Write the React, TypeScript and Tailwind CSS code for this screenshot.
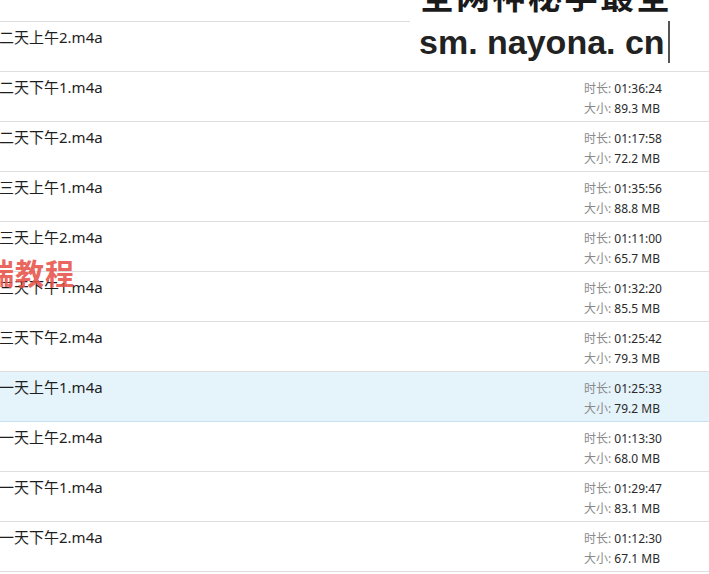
import React from "react";

interface Track {
  name: string;
  duration?: string;
  size?: string;
  active?: boolean;
}

const tracks: Track[] = [
  { name: "第一天下午2.m4a", duration: "01:12:30", size: "67.1 MB" },
  { name: "第二天上午2.m4a" },
  { name: "第二天下午1.m4a", duration: "01:36:24", size: "89.3 MB" },
  { name: "第二天下午2.m4a", duration: "01:17:58", size: "72.2 MB" },
  { name: "第三天上午1.m4a", duration: "01:35:56", size: "88.8 MB" },
  { name: "第三天上午2.m4a", duration: "01:11:00", size: "65.7 MB" },
  { name: "第三天下午1.m4a", duration: "01:32:20", size: "85.5 MB" },
  { name: "第三天下午2.m4a", duration: "01:25:42", size: "79.3 MB" },
  { name: "第一天上午1.m4a", duration: "01:25:33", size: "79.2 MB", active: true },
  { name: "第一天上午2.m4a", duration: "01:13:30", size: "68.0 MB" },
  { name: "第一天下午1.m4a", duration: "01:29:47", size: "83.1 MB" },
  { name: "第一天下午2.m4a", duration: "01:12:30", size: "67.1 MB" },
];

const font = { fontFamily: '"Noto Sans", "Noto Sans CJK SC", sans-serif' };

const Row: React.FC<{ t: Track; first?: boolean }> = ({ t, first }) => (
  <div
    className={
      "flex h-[50px] border-b " +
      (t.active ? "bg-[#e5f3fb] border-[#c6e2f2]" : "bg-white border-[#dedede]")
    }
  >
    <div className="-ml-[16px] pt-[5px] text-[15px] leading-[20px] text-[#1e1e1e]">
      {t.name}
    </div>
    {!first && (
      <div className="ml-auto w-[125px] pt-[7px] text-[12px] leading-[20px]">
        {t.duration && (
          <>
            <div>
              <span className="text-[#8a8a8a]">时长: </span>
              <span className="text-[#2a2a2a]">{t.duration}</span>
            </div>
            <div>
              <span className="text-[#8a8a8a]">大小: </span>
              <span className="text-[#2a2a2a]">{t.size}</span>
            </div>
          </>
        )}
      </div>
    )}
  </div>
);

export default function App() {
  return (
    <div className="relative h-[574px] w-[709px] overflow-hidden bg-white" style={font}>
      <div className="-mt-[28px] flex flex-col">
        {tracks.map((t, i) => (
          <Row key={i} t={t} first={i === 0} />
        ))}
      </div>

      {/* watermark box top right */}
      <div className="absolute right-0 top-0 h-[68px] w-[299px] overflow-hidden bg-white">
        <div
          className="-mt-[23px] pl-[10px] text-[34px] font-bold leading-[36px] tracking-[2px] text-[#1a1a1a]"
          style={{ fontFamily: '"Noto Sans CJK SC", sans-serif' }}
        >
          全网神秘学最全
        </div>
        <div className="flex items-center pl-[9px] pt-[8px]">
          <span
            className="text-[34px] font-bold leading-[38px] text-[#222]"
            style={{ fontFamily: '"Liberation Sans", sans-serif' }}
          >
            sm. nayona. cn
          </span>
          <span className="ml-[3px] h-[42px] w-[2px] bg-[#555]" />
        </div>
      </div>

      {/* red watermark */}
      <div
        className="absolute left-[-15px] top-[254px] text-[29px] font-bold leading-[36px] tracking-[1px] text-[#e8524a]/90"
        style={{ fontFamily: '"Noto Sans CJK SC", sans-serif' }}
      >
        瑞教程
      </div>
    </div>
  );
}
